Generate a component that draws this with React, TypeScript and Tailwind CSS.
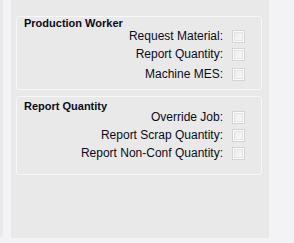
const groups = [
  {
    title: "Production Worker",
    rows: [
      { label: "Request Material:", mt: "mt-[1px]" },
      { label: "Report Quantity:", mt: "mt-[5px]" },
      { label: "Machine MES:", mt: "mt-[7px]" },
    ],
    box: "pt-0 pb-[8px]",
  },
  {
    title: "Report Quantity",
    rows: [
      { label: "Override Job:", mt: "-mt-[1px]" },
      { label: "Report Scrap Quantity:", mt: "mt-[5px]" },
      { label: "Report Non-Conf Quantity:", mt: "mt-[5px]" },
    ],
    box: "pt-[3px] pb-[14px]",
  },
];

function Check() {
  return (
    <div className="w-[13px] h-[13px] border border-[#d3d3d3] bg-[#fbfbfb] p-[1px]">
      <div className="w-full h-full border border-[#e4e4e4] bg-[linear-gradient(135deg,#eeeeee,#f6f6f6)]" />
    </div>
  );
}

export default function App() {
  return (
    <div className="w-[294px] h-[243px] bg-[#f3f3f5] flex font-['Liberation_Sans',Arial,sans-serif] text-[#0b0b1a]">
      {/* left strip */}
      <div className="w-[3px] h-[237px] bg-[#e9e9e9] rounded-br-[2px]" />
      <div className="w-[8px]" />

      {/* panel */}
      <div className="w-[258px] h-[238px] bg-[#e9e9e9] rounded-b-[2px] pt-[16px] px-[5px] flex flex-col gap-[6px]">
        {groups.map((g) => (
          <div
            key={g.title}
            className={`w-[246px] border border-[#f7f7f7] rounded-[3px] flex flex-col ${g.box}`}
          >
            <div className="pl-[7px] text-[11px] leading-[12px] font-bold">
              {g.title}
            </div>
            {g.rows.map((r) => (
              <div
                key={r.label}
                className={`h-[13px] flex items-center justify-end gap-[9px] pr-[16px] ${r.mt}`}
              >
                <span className="text-[12px] leading-[13px]">{r.label}</span>
                <Check />
              </div>
            ))}
          </div>
        ))}
      </div>
    </div>
  );
}
